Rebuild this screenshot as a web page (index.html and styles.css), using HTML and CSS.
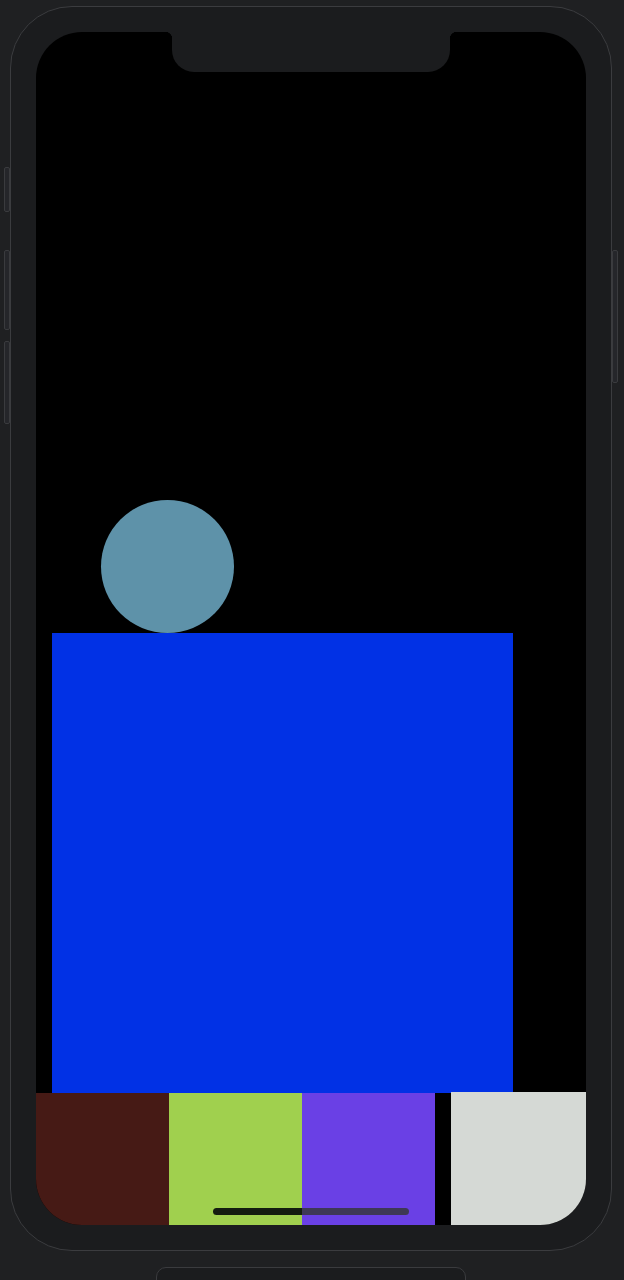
FILE: index.html
```html
<!DOCTYPE html>
<html lang="en">
<head>
<meta charset="utf-8">
<title>Phone</title>
<link rel="stylesheet" href="styles.css">
</head>
<body>
<div class="phone">
  <span class="btn btn-mute"></span>
  <span class="btn btn-vol-up"></span>
  <span class="btn btn-vol-down"></span>
  <span class="btn btn-power"></span>
  <div class="screen">
    <div class="notch"></div>
    <div class="circle"></div>
    <div class="square"></div>
    <div class="swatches">
      <div class="sw sw-brown"></div>
      <div class="sw sw-green"></div>
      <div class="sw sw-purple"></div>
      <div class="sw sw-gap"></div>
      <div class="sw sw-grey"></div>
    </div>
    <div class="home-indicator"></div>
  </div>
</div>
<div class="stand"></div>
</body>
</html>
```
FILE: styles.css
```css
html, body {
  margin: 0;
  padding: 0;
  height: 1280px;
  overflow: hidden;
  background: #1f2022;
  font-family: "Liberation Sans", Arial, sans-serif;
}

body {
  padding-top: 6px;
  box-sizing: border-box;
}

.phone {
  position: relative;
  margin-left: 10px;
  width: 602px;
  height: 1245px;
  box-sizing: border-box;
  padding: 25px;
  border: 1px solid #3b3c3f;
  border-radius: 62px;
  background: #1b1c1e;
}

.btn {
  position: absolute;
  width: 6px;
  background: #25262a;
  border: 1px solid #3a3b3e;
  border-radius: 2px;
  box-sizing: border-box;
}

.btn-mute { left: -7px; top: 160px; height: 45px; }
.btn-vol-up { left: -7px; top: 243px; height: 80px; }
.btn-vol-down { left: -7px; top: 334px; height: 83px; }
.btn-power { right: -7px; top: 243px; height: 133px; }

.screen {
  position: relative;
  width: 550px;
  height: 1193px;
  background: #000;
  border-radius: 46px;
  overflow: hidden;
  display: flex;
  flex-direction: column;
  justify-content: flex-end;
}

.notch {
  position: absolute;
  top: 0;
  left: 136px;
  width: 278px;
  height: 40px;
  background: #1b1c1e;
  border-radius: 0 0 22px 22px;
}

.notch::before,
.notch::after {
  content: "";
  position: absolute;
  top: 0;
  width: 7px;
  height: 7px;
}

.notch::before {
  left: -7px;
  background: radial-gradient(circle at 0 100%, transparent 7px, #1b1c1e 7.5px);
}

.notch::after {
  right: -7px;
  background: radial-gradient(circle at 100% 100%, transparent 7px, #1b1c1e 7.5px);
}

.circle {
  width: 133px;
  height: 133px;
  margin-left: 65px;
  border-radius: 50%;
  background: #5e92a9;
  flex: none;
}

.square {
  width: 461px;
  height: 460px;
  margin-left: 16px;
  background: #0131e5;
  flex: none;
}

.swatches {
  display: grid;
  grid-template-columns: 133px 133px 133px 16px 1fr;
  height: 132px;
  flex: none;
}

.sw-brown { background: #461a15; }
.sw-green { background: #a0d04e; }
.sw-purple { background: #6a40e5; }
.sw-gap { background: #000; }
.sw-grey { background: #d5d9d5; margin-top: -1px; }

.home-indicator {
  position: absolute;
  left: 177px;
  bottom: 10px;
  width: 196px;
  height: 7px;
  border-radius: 4px;
  background: linear-gradient(90deg, #141c10 0, #141c10 89px, #3e3856 89px, #3e3856 100%);
}

.stand {
  margin-top: 16px;
  margin-left: 156px;
  width: 310px;
  height: 40px;
  border: 1px solid #3a3b3e;
  border-radius: 10px;
  background: #1b1c1e;
  box-sizing: border-box;
}
```
